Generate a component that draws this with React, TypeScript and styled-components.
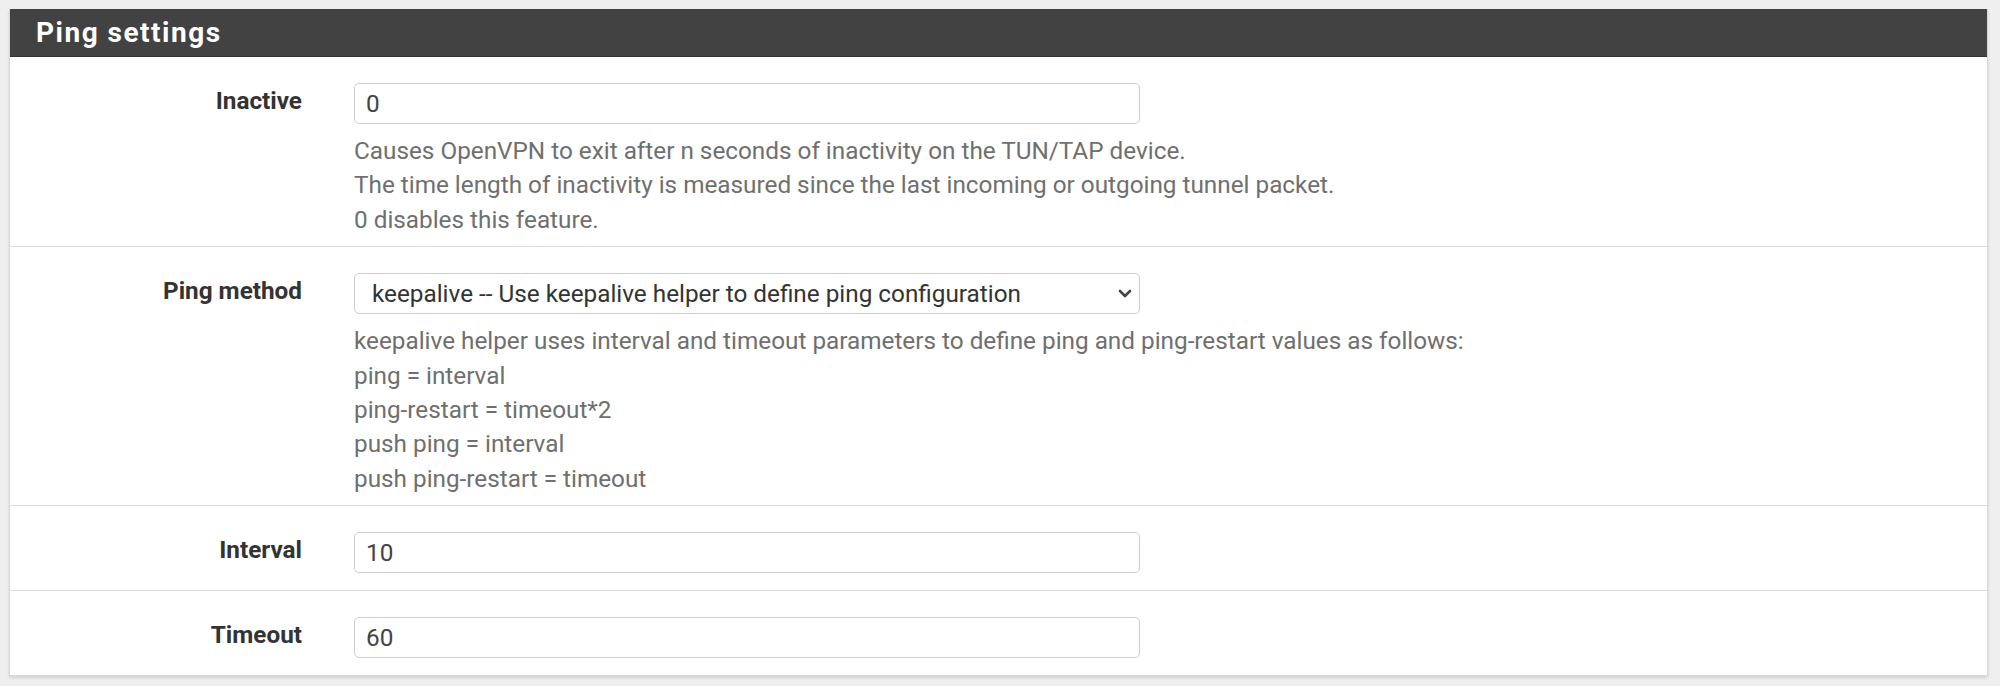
import React from "react";
import styled, { createGlobalStyle } from "styled-components";

const GlobalStyle = createGlobalStyle`
  html, body { margin: 0; padding: 0; background: #efefef; }
  body { font-family: Roboto, "Liberation Sans", Arial, sans-serif; }
`;

const Page = styled.div`
  padding: 9px 0 0 9px;
  min-height: 686px;
  box-sizing: border-box;
`;

const Panel = styled.section`
  width: 1979px;
  background: #fff;
  border: 1px solid #d9d9d9;
  border-top: none;
  box-sizing: border-box;
  box-shadow: 0 2px 3px rgba(0, 0, 0, 0.12);
`;

const Header = styled.header`
  height: 47px;
  background: #424242;
  display: flex;
  align-items: center;
  padding-left: 26px;
  border-bottom: 1px solid #333;
`;

const Title = styled.h2`
  margin: 0;
  color: #fff;
  font-size: 28px;
  font-weight: 700;
  letter-spacing: 1.5px;
`;

const Row = styled.div<{ $last?: boolean }>`
  display: grid;
  grid-template-columns: 317px 1fr;
  padding: 26px 0 10px;
  border-bottom: ${(p) => (p.$last ? "none" : "1px solid #dcdcdc")};
`;

const Label = styled.label`
  text-align: right;
  padding-right: 25px;
  padding-top: 1px;
  font-size: 24.3px;
  font-weight: 700;
  color: #333;
  line-height: 34px;
`;

const Control = styled.div`
  padding-left: 27px;
  display: flex;
  flex-direction: column;
  align-items: flex-start;
`;

const TextInput = styled.input`
  width: 786px;
  height: 41px;
  box-sizing: border-box;
  border: 1.5px solid #cdcdcd;
  border-radius: 5px;
  padding: 0 11px;
  margin-bottom: 7px;
  font-family: Roboto, "Liberation Sans", Arial, sans-serif;
  font-size: 24.3px;
  color: #444;
  background: #fff;
  outline: none;
`;

const SelectWrap = styled.div`
  position: relative;
  width: 786px;
  margin-bottom: 7px;
`;

const Select = styled.select`
  width: 100%;
  height: 41px;
  box-sizing: border-box;
  border: 1.5px solid #cdcdcd;
  border-radius: 5px;
  padding: 0 40px 0 17px;
  font-family: Roboto, "Liberation Sans", Arial, sans-serif;
  font-size: 24.3px;
  color: #333;
  background: #fff;
  appearance: none;
  -webkit-appearance: none;
  outline: none;
`;

const Chevron = styled.svg`
  position: absolute;
  right: 8px;
  top: 50%;
  width: 14px;
  height: 10px;
  margin-top: -5px;
  pointer-events: none;
`;

const Help = styled.div`
  margin-top: 3px;
  margin-bottom: -1px;
  font-size: 24.3px;
  line-height: 34.4px;
  color: #6f6f6f;
`;

const Line = styled.div``;

const Field: React.FC<{ label: string; last?: boolean; children: React.ReactNode }> = ({
  label,
  last,
  children,
}) => (
  <Row $last={last}>
    <Label>{label}</Label>
    <Control>{children}</Control>
  </Row>
);

export default function App() {
  return (
    <>
      <GlobalStyle />
      <Page>
        <Panel>
          <Header>
            <Title>Ping settings</Title>
          </Header>
          <Field label="Inactive">
            <TextInput defaultValue="0" />
            <Help>
              <Line>Causes OpenVPN to exit after n seconds of inactivity on the TUN/TAP device.</Line>
              <Line>The time length of inactivity is measured since the last incoming or outgoing tunnel packet.</Line>
              <Line>0 disables this feature.</Line>
            </Help>
          </Field>
          <Field label="Ping method">
            <SelectWrap>
              <Select defaultValue="keepalive">
                <option value="keepalive">keepalive -- Use keepalive helper to define ping configuration</option>
                <option value="ping">ping -- Define ping parameters manually</option>
              </Select>
              <Chevron viewBox="0 0 14 10">
                <path d="M2 2 L7 7 L12 2" fill="none" stroke="#444" strokeWidth="2.6" strokeLinecap="round" strokeLinejoin="round" />
              </Chevron>
            </SelectWrap>
            <Help>
              <Line>keepalive helper uses interval and timeout parameters to define ping and ping-restart values as follows:</Line>
              <Line>ping = interval</Line>
              <Line>ping-restart = timeout*2</Line>
              <Line>push ping = interval</Line>
              <Line>push ping-restart = timeout</Line>
            </Help>
          </Field>
          <Field label="Interval">
            <TextInput defaultValue="10" />
          </Field>
          <Field label="Timeout" last>
            <TextInput defaultValue="60" />
          </Field>
        </Panel>
      </Page>
    </>
  );
}
